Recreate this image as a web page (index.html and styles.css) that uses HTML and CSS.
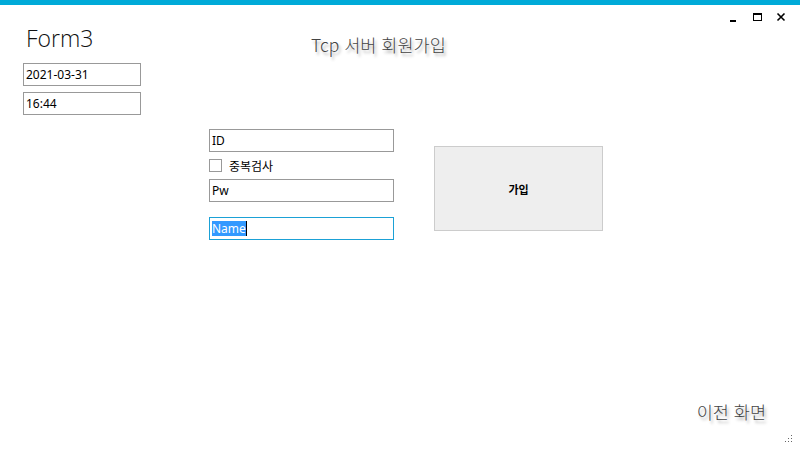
FILE: index.html
```html
<!DOCTYPE html>
<html lang="ko">
<head>
<meta charset="utf-8">
<title>Form3</title>
<link rel="stylesheet" href="styles.css">
</head>
<body>
<div class="window">
  <div class="accent"></div>
  <div class="header">
    <div class="left">
      <div class="app-title">Form3</div>
      <div class="textbox">2021-03-31</div>
      <div class="textbox gap">16:44</div>
    </div>
    <div class="title">Tcp 서버 회원가입</div>
    <div class="controls">
      <svg class="ctl" width="12" height="12" viewBox="0 0 12 12"><rect x="2" y="8" width="6" height="2" fill="#000"/></svg>
      <svg class="ctl" width="12" height="12" viewBox="0 0 12 12"><rect x="1.5" y="1.5" width="8" height="7" fill="none" stroke="#000" stroke-width="1"/><rect x="1" y="1" width="9" height="2" fill="#000"/></svg>
      <svg class="ctl" width="12" height="12" viewBox="0 0 12 12"><path d="M1.5 1.5 L8.5 8.5 M8.5 1.5 L1.5 8.5" stroke="#000" stroke-width="1.6" fill="none"/></svg>
    </div>
  </div>
  <div class="form">
    <div class="fields">
      <div class="textbox">ID</div>
      <label class="check"><span class="box"></span><span>중복검사</span></label>
      <div class="textbox">Pw</div>
      <div class="textbox focused"><span class="sel">Name</span><span class="caret"></span></div>
    </div>
    <div class="btn">가입</div>
  </div>
  <div class="footer">
    <div class="back">이전 화면</div>
  </div>
  <svg class="grip" width="10" height="10" viewBox="0 0 10 10">
    <rect x="7" y="1" width="1" height="1" fill="#666"/>
    <rect x="4" y="4" width="1" height="1" fill="#666"/>
    <rect x="7" y="4" width="1" height="1" fill="#666"/>
    <rect x="1" y="7" width="1" height="1" fill="#666"/>
    <rect x="4" y="7" width="1" height="1" fill="#666"/>
    <rect x="7" y="7" width="1" height="1" fill="#666"/>
  </svg>
</div>
</body>
</html>
```
FILE: styles.css
```css
* { box-sizing: border-box; }
html, body { margin: 0; padding: 0; background: #fff; }
body {
  font-family: "Noto Sans", "Noto Sans CJK KR", sans-serif;
  font-size: 12px;
  color: #000;
}
.window {
  position: relative;
  width: 800px;
  height: 450px;
  display: flex;
  flex-direction: column;
  overflow: hidden;
}
.accent { height: 5px; background: #00aad8; flex: none; }
.header { display: flex; align-items: flex-start; }
.left {
  margin-left: 23px;
  width: 118px;
  display: flex;
  flex-direction: column;
}
.app-title {
  font-family: "Open Sans", "Noto Sans", sans-serif;
  font-weight: 300;
  font-size: 23px;
  line-height: 28px;
  padding-left: 3px;
  margin-top: 19px;
  margin-bottom: 11px;
  color: #111;
}
.textbox {
  height: 23px;
  border: 1px solid #999;
  padding: 0 2px;
  line-height: 21px;
  font-size: 12px;
  white-space: nowrap;
  display: flex;
  align-items: center;
}
.textbox.gap { margin-top: 6px; }
.title {
  margin-left: 170px;
  margin-top: 28px;
  font-family: "Noto Sans CJK KR", sans-serif;
  font-weight: 300;
  font-size: 17.5px;
  line-height: 24px;
  color: #444;
  text-shadow: 2px 3px 3px rgba(0,0,0,0.3);
}
.controls {
  margin-left: auto;
  margin-top: 7px;
  margin-right: 12px;
  display: flex;
  gap: 12px;
}
.ctl { display: block; }
.form {
  display: flex;
  align-items: flex-start;
  margin-left: 209px;
  margin-top: 14px;
}
.fields {
  width: 185px;
  display: flex;
  flex-direction: column;
}
.check {
  display: flex;
  align-items: center;
  gap: 7px;
  height: 13px;
  margin: 7px 0;
  font-family: "Noto Sans CJK KR", sans-serif;
  font-size: 12px;
}
.box {
  width: 13px;
  height: 13px;
  border: 1px solid #999;
  background: #fff;
  flex: none;
}
.focused { margin-top: 15px; border-color: #1ba1d6; }
.sel { background: #3399ff; color: #fff; line-height: 15px; }
.caret { width: 1px; height: 15px; background: #000; }
.btn {
  width: 169px;
  height: 85px;
  margin-left: 40px;
  margin-top: 17px;
  background: #eeeeee;
  border: 1px solid #cccccc;
  display: flex;
  align-items: center;
  justify-content: center;
  font-family: "Noto Sans CJK KR", sans-serif;
  font-weight: 700;
  font-size: 11px;
}
.footer {
  margin-top: auto;
  display: flex;
  justify-content: flex-end;
  padding-right: 34px;
  padding-bottom: 26px;
}
.back {
  font-family: "Noto Sans CJK KR", sans-serif;
  font-weight: 300;
  font-size: 17.5px;
  line-height: 24px;
  color: #444;
  text-shadow: 2px 3px 3px rgba(0,0,0,0.3);
}
.grip { position: absolute; right: 6px; bottom: 6px; }
```
